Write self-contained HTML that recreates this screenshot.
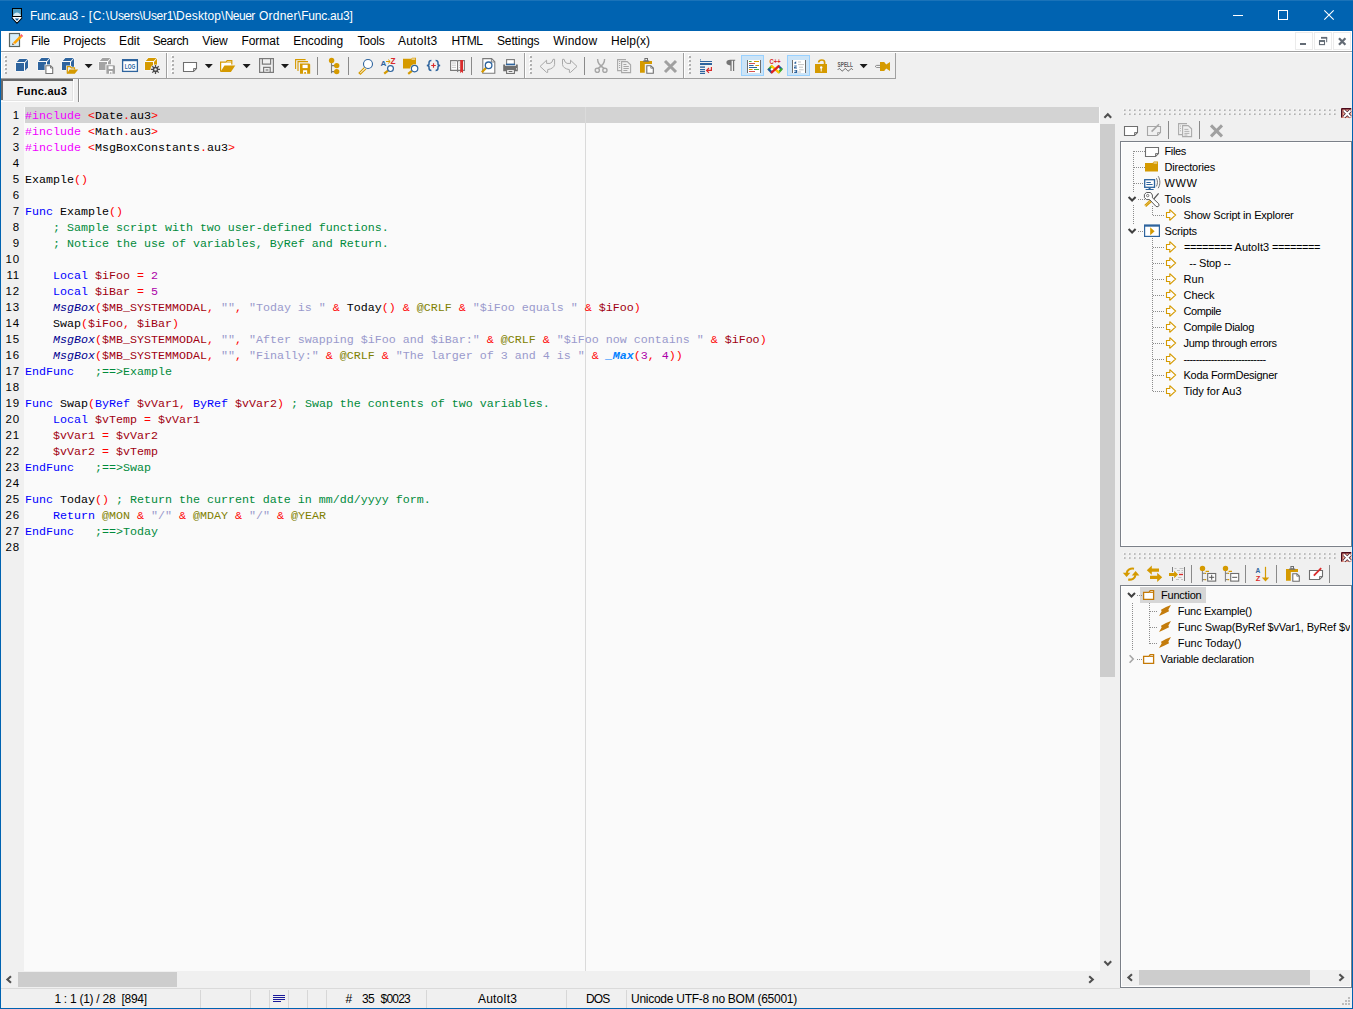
<!DOCTYPE html>
<html lang="en"><head><meta charset="utf-8"><title>Func.au3 - PSPad</title>
<style>

html,body{margin:0;padding:0;}
body{width:1353px;height:1009px;overflow:hidden;background:#f0f0f0;font-family:'Liberation Sans',sans-serif;}
#win{position:relative;width:1353px;height:1009px;background:#f0f0f0;overflow:hidden;}
#win div,#win span,#win svg{position:absolute;}
.t{white-space:pre;line-height:1;font-family:'Liberation Sans',sans-serif;color:#000;}
.code{left:25px;height:16px;line-height:16px;white-space:pre;font-family:'Liberation Mono',monospace;font-size:11.667px;color:#000;}
.code span{position:static !important;}
.ln{left:1px;width:18.800px;letter-spacing:0.700px;text-align:right;height:16px;line-height:16px;font-size:11.5px;color:#000;font-family:'Liberation Sans',sans-serif;}
.k{color:#0000ff}.c{color:#008a3a}.s{color:#9999cc}.o{color:#ff0000}.v{color:#a00010}.n{color:#ac00a9}
.m{color:#808000}.p{color:#f000ff}.f{color:#000090;font-style:italic}.u{color:#0080ff;font-style:italic;font-weight:bold}

</style></head>
<body>
<div id="win">
<div style="left:0;top:0;width:1353px;height:31px;background:#0063b1"></div>
<div style="left:0;top:0;width:1353px;height:1px;background:#1a73b9"></div>
<div style="left:0;top:31px;width:1px;height:978px;background:#0063b1"></div>
<div style="left:1352px;top:31px;width:1px;height:978px;background:#0063b1"></div>
<div style="left:0;top:1008px;width:1353px;height:1px;background:#0063b1"></div>
<svg style="left:10px;top:6px" width="14" height="19" viewBox="10 6 14 19">
<rect x="12.500" y="8.500" width="9" height="8" fill="#4d9bc0" stroke="#000" stroke-width="1"/>
<path d="M13 16c0.800-2.400 2.600-3.400 4-3.400s3.200 1 4 3.400z" fill="#d4e9f0"/>
<path d="M12.400 17h9.200v1.200l-4.600 4.900-4.600-4.900z" fill="#fff"/>
<path d="M12 17.400l0.300 0.900 4.700 5 4.700-5 0.300-0.900" fill="none" stroke="#000" stroke-width="1.100"/>
<path d="M14.800 18.600h4.400l-2.200 2.300z" fill="#0a5a96"/>
</svg>
<span class="t" style="left:30.0px;top:9.64px;font-size:12px;color:#fff;letter-spacing:-0.258px;">Func.au3 - </span>
<span class="t" style="left:88.8px;top:9.64px;font-size:12px;color:#fff;letter-spacing:0.507px;">[C:\</span>
<span class="t" style="left:109.5px;top:9.64px;font-size:12px;color:#fff;letter-spacing:-0.279px;">Users\</span>
<span class="t" style="left:142.5px;top:9.64px;font-size:12px;color:#fff;letter-spacing:-0.291px;">User1\</span>
<span class="t" style="left:176.1px;top:9.64px;font-size:12px;color:#fff;letter-spacing:0.155px;">Desktop\</span>
<span class="t" style="left:224.7px;top:9.64px;font-size:12px;color:#fff;letter-spacing:-0.518px;">Neuer </span>
<span class="t" style="left:259.0px;top:9.64px;font-size:12px;color:#fff;letter-spacing:0.216px;">Ordner\</span>
<span class="t" style="left:301.2px;top:9.64px;font-size:12px;color:#fff;letter-spacing:-0.219px;">Func.au3]</span>
<svg style="left:1225px;top:0" width="127" height="31" viewBox="0 0 127 31" shape-rendering="crispEdges">
<rect x="8" y="15" width="10" height="1" fill="#fff"/>
<rect x="53.5" y="10.5" width="9" height="9" fill="none" stroke="#fff" stroke-width="1"/>
<g shape-rendering="auto"><path d="M99.3 10.3l9.4 9.4M108.7 10.3l-9.4 9.4" stroke="#fff" stroke-width="1.1" fill="none"/></g>
</svg>
<div style="left:1px;top:31px;width:1351px;height:20px;background:#fff"></div>
<div style="left:1px;top:51px;width:1351px;height:1px;background:#a0a0a0"></div>
<div style="left:1px;top:52px;width:1351px;height:1px;background:#fff"></div>
<svg style="left:8px;top:32px" width="17" height="17" viewBox="0 0 17 17">
<rect x="1.5" y="1.5" width="10" height="13" fill="#d6eefb" stroke="#5a6460" stroke-width="1.2"/>
<path d="M4.2 12.8l1.2-2.6 6.6-6.8 1.9 1.9-6.7 6.6z" fill="#ffa400"/>
<path d="M12 3.4l1.3-1.3 1.9 1.9-1.3 1.3z" fill="#ff5a66"/>
<path d="M4.2 12.8l0.6-1.5 1.2 1.1z" fill="#000"/>
<path d="M4.9 11.4l0.5-1.2 1.9 1.9-1.2 0.4z" fill="#ffc79a"/>
</svg>
<span class="t" style="left:31.0px;top:35.14px;font-size:12px;letter-spacing:-0.136px;">File</span>
<span class="t" style="left:63.300000000000004px;top:35.14px;font-size:12px;letter-spacing:-0.132px;">Projects</span>
<span class="t" style="left:119.10000000000001px;top:35.14px;font-size:12px;letter-spacing:0.028px;">Edit</span>
<span class="t" style="left:152.7px;top:35.14px;font-size:12px;letter-spacing:-0.405px;">Search</span>
<span class="t" style="left:202.2px;top:35.14px;font-size:12px;letter-spacing:-0.074px;">View</span>
<span class="t" style="left:241.39999999999998px;top:35.14px;font-size:12px;letter-spacing:-0.019px;">Format</span>
<span class="t" style="left:293.2px;top:35.14px;font-size:12px;letter-spacing:-0.006px;">Encoding</span>
<span class="t" style="left:357.59999999999997px;top:35.14px;font-size:12px;letter-spacing:-0.223px;">Tools</span>
<span class="t" style="left:398.0px;top:35.14px;font-size:12px;letter-spacing:0.210px;">AutoIt3</span>
<span class="t" style="left:451.4px;top:35.14px;font-size:12px;letter-spacing:-0.368px;">HTML</span>
<span class="t" style="left:496.9px;top:35.14px;font-size:12px;letter-spacing:-0.095px;">Settings</span>
<span class="t" style="left:553.2px;top:35.14px;font-size:12px;letter-spacing:0.252px;">Window</span>
<span class="t" style="left:611.1px;top:35.14px;font-size:12px;letter-spacing:0.033px;">Help(x)</span>
<svg style="left:1294px;top:31px" width="58" height="20" viewBox="0 0 58 20">
<g fill="#fff" stroke="#ebebeb" stroke-width="1"><rect x="1.500" y="1.500" width="17" height="17"/><rect x="20.500" y="1.500" width="17" height="17"/><rect x="39.500" y="1.500" width="17" height="17"/></g>
<rect x="6" y="12" width="6" height="2" fill="#636b75"/>
<path d="M27 6.800h6.200" stroke="#636b75" stroke-width="1.800"/><path d="M32.700 6.800v4.400" stroke="#636b75" stroke-width="1"/>
<rect x="25.500" y="10" width="5" height="3.600" fill="#fff" stroke="#636b75" stroke-width="1.100"/><path d="M25 10h6" stroke="#636b75" stroke-width="1.800"/>
<path d="M45 7.300l6.400 6.400M51.400 7.300l-6.400 6.400" stroke="#636b75" stroke-width="2.300" fill="none"/>
</svg>
<svg style="left:0;top:79px" width="90" height="24" viewBox="0 79 90 24" shape-rendering="crispEdges">
<rect x="1" y="79" width="72" height="2" fill="#696969"/>
<rect x="1" y="79" width="2" height="21" fill="#696969"/>
<rect x="3" y="81" width="69" height="19" fill="#f1f1f1"/>
<rect x="72" y="81" width="1" height="20" fill="#e3e3e3"/>
<rect x="3" y="100" width="70" height="1" fill="#e3e3e3"/>
<rect x="73" y="79" width="1" height="23" fill="#fff"/>
<rect x="1" y="101" width="73" height="1" fill="#fff"/>
<rect x="78" y="79" width="1" height="23" fill="#8c8c8c"/>
<rect x="79" y="79" width="1" height="23" fill="#fff"/>
</svg>
<span class="t" style="left:16.7px;top:86.09px;font-size:11px;font-weight:bold;letter-spacing:0.288px;">Func.au3</span>
<svg style="left:0;top:52px" width="900" height="28" viewBox="0 52 900 28">
<rect x="1" y="78" width="895" height="1" fill="#a0a0a0" shape-rendering="crispEdges"/><rect x="1" y="53" width="1" height="25" fill="#fff"/>
<rect x="895" y="53" width="1" height="26" fill="#a0a0a0" shape-rendering="crispEdges"/>
<g shape-rendering="crispEdges"><rect x="4" y="55" width="2" height="2" fill="#fff"/><rect x="5" y="56" width="2" height="2" fill="#b0b0b0"/><rect x="4" y="59" width="2" height="2" fill="#fff"/><rect x="5" y="60" width="2" height="2" fill="#b0b0b0"/><rect x="4" y="63" width="2" height="2" fill="#fff"/><rect x="5" y="64" width="2" height="2" fill="#b0b0b0"/><rect x="4" y="67" width="2" height="2" fill="#fff"/><rect x="5" y="68" width="2" height="2" fill="#b0b0b0"/><rect x="4" y="71" width="2" height="2" fill="#fff"/><rect x="5" y="72" width="2" height="2" fill="#b0b0b0"/></g>
<path d="M16 63l3.400-4h8.600v8.400l-3.400 3.600h-8.600z" fill="#fbfbfb" stroke="#fbfbfb" stroke-width="1.200" stroke-linejoin="round"/><g fill="#2e649e"><rect x="16" y="63" width="8" height="8"/><path d="M16.7 62.1l2.700-3.100h8l-2.700 3.100z"/><path d="M25 62.9l3-3.300v7.800l-3 3.300z"/></g>
<path d="M38 62l3.400-4h8.600v8.400l-3.400 3.600h-8.600z" fill="#fbfbfb" stroke="#fbfbfb" stroke-width="1.200" stroke-linejoin="round"/><g fill="#2e649e"><rect x="38" y="62" width="8" height="8"/><path d="M38.7 61.1l2.700-3.100h8l-2.700 3.100z"/><path d="M47 61.9l3-3.300v7.800l-3 3.300z"/></g>
<rect x="44.600" y="64.400" width="10" height="10.400" fill="#f0f0f0"/><path d="M45.900 65.700h4.800l2 2v5.800h-6.800z" fill="#fff" stroke="#757575" stroke-width="1.100"/><path d="M50.500 65.800v2.200h2.200" fill="none" stroke="#757575" stroke-width="0.900"/>
<path d="M62 62l3.400-4h8.600v8.400l-3.400 3.600h-8.600z" fill="#fbfbfb" stroke="#fbfbfb" stroke-width="1.200" stroke-linejoin="round"/><g fill="#2e649e"><rect x="62" y="62" width="8" height="8"/><path d="M62.7 61.1l2.700-3.100h8l-2.700 3.100z"/><path d="M71 61.9l3-3.300v7.800l-3 3.300z"/></g>
<path d="M66 74.500v-9h5l1 1.200h3.600v2h3.600l-3.800 5.800z" fill="#f0f0f0"/><path d="M67.300 73.400v-6.800h3l1 1.200h3.200v1.800" fill="#f0f0f0" stroke="#d59a00" stroke-width="1.200"/><path d="M66.800 73.800l2.800-4.300h8.600l-3.400 4.300z" fill="#d59a00"/>
<path d="M84.6 64h8l-4 4.2z" fill="#1a1a1a"/>
<path d="M99 62l3.400-4h8.600v8.400l-3.400 3.600h-8.600z" fill="#fbfbfb" stroke="#fbfbfb" stroke-width="1.200" stroke-linejoin="round"/><g fill="#a3a3a3"><rect x="99" y="62" width="8" height="8"/><path d="M99.7 61.1l2.700-3.100h8l-2.700 3.100z"/><path d="M108 61.9l3-3.300v7.800l-3 3.300z"/></g>
<rect x="105.4" y="64.2" width="10" height="10" fill="#f0f0f0"/>
<path d="M106.4 65.2h7.74l0.86 0.86v7.74h-8.6z" fill="#a3a3a3"/><rect x="108.55000000000001" y="66.232" width="4.3" height="2.7520000000000002" fill="#fff"/><path d="M108.98 73.8v-2.924h3.44v2.924h-1.032v-1.548h-1.3760000000000001v1.548z" fill="#fff"/>
<rect x="122.6" y="60" width="14.8" height="11.4" fill="#fff" stroke="#2e649e" stroke-width="1.3"/><rect x="122" y="59" width="16" height="2.2" fill="#2e649e"/>
<text x="130" y="68.600" text-anchor="middle" font-family="Liberation Sans, sans-serif" font-weight="bold" font-size="7.600" fill="#2e649e" textLength="10.600" lengthAdjust="spacingAndGlyphs">LOG</text>
<path d="M145 62l3.400-4h8.600v8.400l-3.400 3.600h-8.600z" fill="#fbfbfb" stroke="#fbfbfb" stroke-width="1.200" stroke-linejoin="round"/><g fill="#d59a00"><rect x="145" y="62" width="8" height="8"/><path d="M145.7 61.1l2.700-3.100h8l-2.700 3.100z"/><path d="M154 61.9l3-3.300v7.800l-3 3.300z"/></g>
<circle cx="155.5" cy="69.4" r="5" fill="#f0f0f0"/>
<g stroke="#4a4a4a" stroke-width="1.3" fill="none"><circle cx="155.5" cy="69.4" r="2.1"/><path d="M155.5 64.9v9M151 69.4h9M152.3 66.2l6.4 6.4M158.7 66.2l-6.4 6.4"/></g><circle cx="155.5" cy="69.4" r="1.2" fill="#f0f0f0"/>
<rect x="166" y="53" width="1" height="26" fill="#a0a0a0" shape-rendering="crispEdges"/><rect x="167" y="53" width="1" height="25" fill="#fff" shape-rendering="crispEdges"/>
<g shape-rendering="crispEdges"><rect x="171" y="55" width="2" height="2" fill="#fff"/><rect x="172" y="56" width="2" height="2" fill="#b0b0b0"/><rect x="171" y="59" width="2" height="2" fill="#fff"/><rect x="172" y="60" width="2" height="2" fill="#b0b0b0"/><rect x="171" y="63" width="2" height="2" fill="#fff"/><rect x="172" y="64" width="2" height="2" fill="#b0b0b0"/><rect x="171" y="67" width="2" height="2" fill="#fff"/><rect x="172" y="68" width="2" height="2" fill="#b0b0b0"/><rect x="171" y="71" width="2" height="2" fill="#fff"/><rect x="172" y="72" width="2" height="2" fill="#b0b0b0"/></g>
<path d="M183.5 62.5h13v6l-3 3h-10z" fill="#fff" stroke="#6e6e6e" stroke-width="1.1"/><path d="M196.5 68.5h-3v3" fill="none" stroke="#6e6e6e" stroke-width="0.8800000000000001"/>
<path d="M204.8 64h8l-4 4.2z" fill="#1a1a1a"/>
<path d="M220.6 71.5v-9.4h5.4l1.2-1.6h4.6v4" fill="#fff" stroke="#d59a00" stroke-width="1.2"/><path d="M226.6 62h5" stroke="#d59a00" stroke-width="1"/><path d="M220.3 72l4.2-6.6h10.8l-4.4 6.6z" fill="#d59a00"/>
<path d="M242.6 64h8l-4 4.2z" fill="#1a1a1a"/>
<g fill="none" stroke="#7b7b7b" stroke-width="1.2"><rect x="259.6" y="58.6" width="13.8" height="13.8"/><path d="M262.4 58.6v5.6h8.2v-5.6"/><path d="M263.6 72.4v-5h6.6v5"/></g><rect x="265.6" y="69.4" width="2.8" height="1.2" fill="#7b7b7b"/>
<path d="M281 64h8l-4 4.2z" fill="#1a1a1a"/>
<path d="M295.6 69v-9.4h10M298 71v-9.4h10" fill="none" stroke="#d59a00" stroke-width="1.1"/>
<path d="M300 63.6h9.18l1.02 1.02v9.18h-10.2z" fill="#d59a00"/><rect x="302.55" y="64.824" width="5.1" height="3.2640000000000002" fill="#fff"/><path d="M303.06 73.8v-3.468h4.08v3.468h-1.224v-1.836h-1.6320000000000001v1.836z" fill="#fff"/>
<rect x="317" y="57" width="1" height="18" fill="#8a8a8a" shape-rendering="crispEdges"/>
<path d="M331.5 62v11.2M331.5 65.6h4M331.5 71.6h4" stroke="#7b7b7b" stroke-width="1.1" fill="none"/><g fill="#d59a00"><circle cx="331.6" cy="60.5" r="2.7"/><circle cx="336.7" cy="65.6" r="2.7"/><circle cx="336.7" cy="71.6" r="2.7"/></g>
<rect x="348" y="57" width="1" height="18" fill="#8a8a8a" shape-rendering="crispEdges"/>
<path d="M364.6 67.4l-5.6 5.6 1.4 1.2 5.6-5.4" fill="#fff" stroke="#d59a00" stroke-width="1.1"/><circle cx="368" cy="64" r="4.5" fill="#fff" stroke="#2e649e" stroke-width="1.1"/>
<text x="380.6" y="66" font-family="Liberation Sans, sans-serif" font-weight="bold" font-size="8" fill="#2e649e">A</text>
<text x="390.4" y="64" font-family="Liberation Sans, sans-serif" font-weight="bold" font-size="8.2" fill="#d92b2b">Z</text>
<path d="M386 61.5h4M388.2 59.6l2 1.9-2 1.9" stroke="#d59a00" stroke-width="1" fill="none"/>
<path d="M387.99 70.59L384.2 73.6" stroke="#d59a00" stroke-width="2.2" stroke-linecap="butt"/><circle cx="390.5" cy="68.6" r="2.9" fill="#fff" stroke="#2e649e" stroke-width="1.2"/>
<path d="M403 58.8h8l1.2-1h3.8v10.8h-13z" fill="#d59a00"/><rect x="411.6" y="58.6" width="3.6" height="0.9" fill="#fff"/>
<circle cx="414.6" cy="68.6" r="4.4" fill="#f0f0f0"/>
<path d="M411.88 70.81L408.2 73.8" stroke="#d59a00" stroke-width="2.2" stroke-linecap="butt"/><circle cx="414.6" cy="68.6" r="3.2" fill="#fff" stroke="#2e649e" stroke-width="1.2"/>
<g fill="none" stroke="#2e649e" stroke-width="1.5"><path d="M431.4 60.6c-2 0-2.400 0.800-2.400 2.200v1.200c0 1-0.600 1.500-2.200 1.500 1.600 0 2.200 0.500 2.200 1.500v1.200c0 1.400 0.400 2.200 2.400 2.200"/><path d="M435.600 60.600c2 0 2.400 0.800 2.400 2.200v1.200c0 1 0.600 1.500 2.200 1.500-1.600 0-2.200 0.500-2.200 1.500v1.200c0 1.400-0.400 2.200-2.400 2.200"/></g>
<path d="M433.500 63.200v4.600M431.200 65.500h4.600" stroke="#d92b2b" stroke-width="1.200"/>
<g fill="#fff" stroke="#7b7b7b" stroke-width="1.1"><path d="M450.6 60.6h6.4l0.6 0.8v9.6l-0.6-0.6h-6.4z"/><path d="M464.4 60.6h-6.2l-0.6 0.8v9.6l0.6-0.6h6.2z"/></g>
<path d="M452 63h4M452 65.2h4M452 67.4h4M459 63h1M459 65.2h1M459 67.4h1" stroke="#c8c8c8" stroke-width="1"/>
<path d="M460.2 60h2.8v13.2l-1.4-1.4-1.4 1.4z" fill="#d92b2b"/>
<rect x="471" y="57" width="1" height="18" fill="#8a8a8a" shape-rendering="crispEdges"/>
<path d="M482.8 58.6h8.8l3.2 3.2v11.4h-12z" fill="#fff" stroke="#7b7b7b" stroke-width="1.1"/><path d="M491.4 58.8v3.2h3.2" fill="none" stroke="#7b7b7b" stroke-width="0.9"/>
<path d="M486.07 67.86L481.8 72.2" stroke="#d59a00" stroke-width="2.2" stroke-linecap="butt"/><circle cx="488.6" cy="65.3" r="3.3" fill="#fff" stroke="#2e649e" stroke-width="1.3"/>
<rect x="506.6" y="59.6" width="7.8" height="5" fill="#fff" stroke="#7b7b7b" stroke-width="1.1"/><rect x="506" y="63.6" width="9" height="1.6" fill="#2e649e"/>
<path d="M503.2 64.6h2v1.4h10.6v-1.4h2v6.6h-14.6z" fill="#6e6e6e"/><rect x="516" y="68.4" width="1" height="1" fill="#fff"/>
<rect x="506.6" y="69.6" width="7.8" height="3.8" fill="#fff" stroke="#6e6e6e" stroke-width="1.1"/><rect x="508.6" y="71" width="3.8" height="1" fill="#6e6e6e"/>
<rect x="524" y="53" width="1" height="26" fill="#a0a0a0" shape-rendering="crispEdges"/><rect x="525" y="53" width="1" height="25" fill="#fff" shape-rendering="crispEdges"/>
<g shape-rendering="crispEdges"><rect x="529" y="55" width="2" height="2" fill="#fff"/><rect x="530" y="56" width="2" height="2" fill="#b0b0b0"/><rect x="529" y="59" width="2" height="2" fill="#fff"/><rect x="530" y="60" width="2" height="2" fill="#b0b0b0"/><rect x="529" y="63" width="2" height="2" fill="#fff"/><rect x="530" y="64" width="2" height="2" fill="#b0b0b0"/><rect x="529" y="67" width="2" height="2" fill="#fff"/><rect x="530" y="68" width="2" height="2" fill="#b0b0b0"/><rect x="529" y="71" width="2" height="2" fill="#fff"/><rect x="530" y="72" width="2" height="2" fill="#b0b0b0"/></g>
<path d="M540.1 66.4L546.6 60.2V63.4H550Q552.6 62.6 553 59.3H554.6V64.5Q554 68.6 547.7 69.6V72.4H546.6Z" fill="none" stroke="#a8a8a8" stroke-width="1" stroke-linejoin="miter"/>
<path d="M577 66.4L570.5 60.2V63.4H567.1Q564.5 62.6 564.1 59.3H562.5V64.5Q563.1 68.6 569.4 69.6V72.4H570.5Z" fill="none" stroke="#a8a8a8" stroke-width="1" stroke-linejoin="miter"/>
<rect x="584" y="57" width="1" height="18" fill="#8a8a8a" shape-rendering="crispEdges"/>
<g fill="none" stroke="#a6a6a6" stroke-width="1.400"><path d="M597.600 59c0 4.200 1.400 5.400 6.400 9.400M604.600 59c0 4.200-1.400 5.400-6.400 9.400"/><circle cx="597.300" cy="70.300" r="2.100"/><circle cx="604.900" cy="70.300" r="2.100"/></g>
<g fill="none" stroke="#a8a8a8" stroke-width="1.1"><path d="M621 70.6h-3.4v-11h8.4"/><path d="M621.6 61.6h5.6l3.4 3.2v7.8h-9z"/></g><path d="M623.400 64.500h3M623.400 66.500h5.400M623.400 68.500h5.400M623.400 70.500h4M619 61.500h1.200M619 63.500h1.200M619 65.500h1.200M619 67.500h1.200" stroke="#a8a8a8" stroke-width="1"/>
<path d="M640 61h12v3h-7.200v8.800h-4.800z" fill="#d59a00"/><path d="M643.200 61.800v-1.400h1.200v-2.400h3.600v2.400h1.200v1.400z" fill="#6e6e6e"/><rect x="645.400" y="59" width="1.600" height="1.200" fill="#f0f0f0"/>
<path d="M646.800 65.700h4l2.500 2.400v5.100h-6.500z" fill="#fff" stroke="#6e6e6e" stroke-width="1.100"/><path d="M650.800 65.800v2.400h2.400" fill="none" stroke="#6e6e6e" stroke-width="0.800"/>
<path d="M665 61l11 11M676 61l-11 11" stroke="#a0a0a0" stroke-width="3" fill="none"/>
<rect x="683" y="53" width="1" height="26" fill="#a0a0a0" shape-rendering="crispEdges"/><rect x="684" y="53" width="1" height="25" fill="#fff" shape-rendering="crispEdges"/>
<g shape-rendering="crispEdges"><rect x="688" y="55" width="2" height="2" fill="#fff"/><rect x="689" y="56" width="2" height="2" fill="#b0b0b0"/><rect x="688" y="59" width="2" height="2" fill="#fff"/><rect x="689" y="60" width="2" height="2" fill="#b0b0b0"/><rect x="688" y="63" width="2" height="2" fill="#fff"/><rect x="689" y="64" width="2" height="2" fill="#b0b0b0"/><rect x="688" y="67" width="2" height="2" fill="#fff"/><rect x="689" y="68" width="2" height="2" fill="#b0b0b0"/><rect x="688" y="71" width="2" height="2" fill="#fff"/><rect x="689" y="72" width="2" height="2" fill="#b0b0b0"/></g>
<g fill="#2e649e"><rect x="700" y="59.4" width="1" height="1"/><rect x="700" y="61" width="12" height="1"/><rect x="700" y="63" width="12" height="2"/><rect x="700" y="66.4" width="5" height="1.4"/><rect x="700" y="69" width="5" height="1.2"/><rect x="700" y="71" width="5" height="1.2"/><rect x="700" y="73" width="5" height="1"/></g>
<path d="M711.4 67v3.4h-4.4M709 68l-2.4 2.4 2.4 2.4" fill="none" stroke="#d92b2b" stroke-width="1.2"/>
<path d="M730.4 71v-5.6c-2.4 0-4-1-4-2.8s1.4-2.8 4-2.8h4.8v1h-1v10.2h-1.2v-10.2h-1.4v10.2z" fill="#747474"/>
<rect x="741.5" y="55.5" width="22" height="20" fill="#cce4f7" stroke="#99d1ff" stroke-width="1"/>
<rect x="747.500" y="60" width="13" height="13" fill="#fff"/><path d="M747.500 60v13M760.500 60v13" stroke="#6e6e6e" stroke-width="1"/>
<rect x="749" y="61.0" width="2.6000000000000227" height="1" fill="#4aa84a"/>
<rect x="754" y="61.0" width="5" height="1" fill="#d59a00"/>
<rect x="749" y="63.0" width="6" height="1" fill="#d9534f"/>
<rect x="749" y="65.0" width="4.600000000000023" height="1" fill="#2e649e"/>
<rect x="755.4" y="65.0" width="3.6000000000000227" height="1" fill="#d59a00"/>
<rect x="749" y="67.0" width="8" height="1" fill="#2e649e"/>
<rect x="749" y="69.0" width="3.6000000000000227" height="1" fill="#d59a00"/>
<rect x="754" y="69.0" width="5" height="1" fill="#4aa84a"/>
<rect x="749" y="71.0" width="6" height="1" fill="#d9534f"/>
<text x="769.6" y="64" font-family="Liberation Sans, sans-serif" font-weight="bold" font-size="7.6" fill="#d92b2b" textLength="11" lengthAdjust="spacingAndGlyphs">C++</text>
<path d="M769.600 69l2.400-2.600 2.400 2.600-2.400 2.600zM775.800 69l2.400-2.600 2.400 2.600-2.400 2.600z" fill="#fff"/><g fill="none" stroke-width="2.300" stroke-linecap="square"><path d="M769 69.200L771.300 66.600" stroke="#3fae2a"/><path d="M769 69.600L771.300 72" stroke="#1f5aa0"/><path d="M781.200 68.800L779 66.600" stroke="#1f5aa0"/><path d="M781.200 69.400L779 72" stroke="#3fae2a"/><path d="M772 66.400L778.400 72.200" stroke="#ffc400"/><path d="M772 72.200L778.400 66.400" stroke="#dd2222"/></g>
<rect x="787.5" y="55.5" width="22" height="20" fill="#cce4f7" stroke="#99d1ff" stroke-width="1"/>
<rect x="792.500" y="60" width="13" height="13" fill="#fff"/><path d="M792.500 60v13M805.500 60v13" stroke="#6e6e6e" stroke-width="1"/>
<rect x="798" y="61.5" width="3" height="1" fill="#c4c4c4"/>
<rect x="798" y="64.1" width="6" height="1" fill="#c4c4c4"/>
<rect x="799" y="66.7" width="4" height="1" fill="#c4c4c4"/>
<rect x="799" y="69.3" width="4.600000000000023" height="1" fill="#c4c4c4"/>
<rect x="798" y="71.5" width="3" height="1" fill="#c4c4c4"/>
<g fill="#2e649e"><path d="M794.4 62.6l1.8-1.4v2.6h-1.8z"/><path d="M794.2 65.4h2.6v1.2h-1.2v1h1.4v1h-3v-1.6h1.4v-0.6h-1.2z"/><path d="M794.2 70h3v3h-3v-0.9h1.8v-0.5h-1.4v-0.8h1.4v-0.3h-1.8z"/></g>
<rect x="815" y="64" width="12" height="9" fill="#d59a00"/><path d="M824.600 64.500v-2.200c0-3-5.600-3.200-6 0.200" fill="none" stroke="#d59a00" stroke-width="1.700"/><circle cx="821.200" cy="67.400" r="1.200" fill="#fff"/><rect x="820.700" y="67.600" width="1" height="3.900" fill="#fff"/>
<text x="837.600" y="66.800" font-family="Liberation Sans, sans-serif" font-weight="bold" font-size="6.400" fill="#5a5a5a" textLength="15.200" lengthAdjust="spacingAndGlyphs">SPELL</text>
<path d="M837.800 69.800c1-1.600 2-1.600 3 0s2 1.600 3 0 2-1.600 3 0 2 1.600 3 0 2-1.600 3 0" fill="none" stroke="#5a5a5a" stroke-width="0.900"/>
<path d="M859.6 64h8l-4 4.2z" fill="#1a1a1a"/>
<path d="M880 62h4.200l2 2.600 3.800-2.600v9l-3.800-2.600-2 2.600h-4.200z" fill="#d59a00"/><path d="M880 65.400h-3.400l-1.400 1 1.400 1h3.400" fill="#fff" stroke="#7b7b7b" stroke-width="0.900"/>
</svg>
<div style="left:1px;top:107px;width:1099px;height:864px;background:#fafafa"></div>
<div style="left:1px;top:107px;width:23px;height:864px;background:#f0f0f0"></div>
<div style="left:25px;top:107px;width:1074px;height:16px;background:#d3d3d3"></div>
<div style="left:585px;top:107px;width:1px;height:16px;background:#dbdbdb"></div><div style="left:585px;top:123px;width:1px;height:848px;background:#dadada"></div>
<div class="ln" style="top:107px">1</div>
<div class="code" style="top:108px"><span class="p">#include</span> <span class="o">&lt;</span>Date<span class="o">.</span>au3<span class="o">&gt;</span></div>
<div class="ln" style="top:123px">2</div>
<div class="code" style="top:124px"><span class="p">#include</span> <span class="o">&lt;</span>Math<span class="o">.</span>au3<span class="o">&gt;</span></div>
<div class="ln" style="top:139px">3</div>
<div class="code" style="top:140px"><span class="p">#include</span> <span class="o">&lt;</span>MsgBoxConstants<span class="o">.</span>au3<span class="o">&gt;</span></div>
<div class="ln" style="top:155px">4</div>
<div class="ln" style="top:171px">5</div>
<div class="code" style="top:172px">Example<span class="o">()</span></div>
<div class="ln" style="top:187px">6</div>
<div class="ln" style="top:203px">7</div>
<div class="code" style="top:204px"><span class="k">Func</span> Example<span class="o">()</span></div>
<div class="ln" style="top:219px">8</div>
<div class="code" style="top:220px">    <span class="c">; Sample script with two user-defined functions.</span></div>
<div class="ln" style="top:235px">9</div>
<div class="code" style="top:236px">    <span class="c">; Notice the use of variables, ByRef and Return.</span></div>
<div class="ln" style="top:251px">10</div>
<div class="ln" style="top:267px">11</div>
<div class="code" style="top:268px">    <span class="k">Local</span> <span class="v">$iFoo</span> <span class="o">=</span> <span class="n">2</span></div>
<div class="ln" style="top:283px">12</div>
<div class="code" style="top:284px">    <span class="k">Local</span> <span class="v">$iBar</span> <span class="o">=</span> <span class="n">5</span></div>
<div class="ln" style="top:299px">13</div>
<div class="code" style="top:300px">    <span class="f">MsgBox</span><span class="o">(</span><span class="v">$MB_SYSTEMMODAL</span><span class="o">,</span> <span class="s">""</span><span class="o">,</span> <span class="s">"Today is "</span> <span class="o">&amp;</span> Today<span class="o">()</span> <span class="o">&amp;</span> <span class="m">@CRLF</span> <span class="o">&amp;</span> <span class="s">"$iFoo equals "</span> <span class="o">&amp;</span> <span class="v">$iFoo</span><span class="o">)</span></div>
<div class="ln" style="top:315px">14</div>
<div class="code" style="top:316px">    Swap<span class="o">(</span><span class="v">$iFoo</span><span class="o">,</span> <span class="v">$iBar</span><span class="o">)</span></div>
<div class="ln" style="top:331px">15</div>
<div class="code" style="top:332px">    <span class="f">MsgBox</span><span class="o">(</span><span class="v">$MB_SYSTEMMODAL</span><span class="o">,</span> <span class="s">""</span><span class="o">,</span> <span class="s">"After swapping $iFoo and $iBar:"</span> <span class="o">&amp;</span> <span class="m">@CRLF</span> <span class="o">&amp;</span> <span class="s">"$iFoo now contains "</span> <span class="o">&amp;</span> <span class="v">$iFoo</span><span class="o">)</span></div>
<div class="ln" style="top:347px">16</div>
<div class="code" style="top:348px">    <span class="f">MsgBox</span><span class="o">(</span><span class="v">$MB_SYSTEMMODAL</span><span class="o">,</span> <span class="s">""</span><span class="o">,</span> <span class="s">"Finally:"</span> <span class="o">&amp;</span> <span class="m">@CRLF</span> <span class="o">&amp;</span> <span class="s">"The larger of 3 and 4 is "</span> <span class="o">&amp;</span> <span class="u">_Max</span><span class="o">(</span><span class="n">3</span><span class="o">,</span> <span class="n">4</span><span class="o">))</span></div>
<div class="ln" style="top:363px">17</div>
<div class="code" style="top:364px"><span class="k">EndFunc</span>   <span class="c">;==&gt;Example</span></div>
<div class="ln" style="top:379px">18</div>
<div class="ln" style="top:395px">19</div>
<div class="code" style="top:396px"><span class="k">Func</span> Swap<span class="o">(</span><span class="k">ByRef</span> <span class="v">$vVar1</span><span class="o">,</span> <span class="k">ByRef</span> <span class="v">$vVar2</span><span class="o">)</span> <span class="c">; Swap the contents of two variables.</span></div>
<div class="ln" style="top:411px">20</div>
<div class="code" style="top:412px">    <span class="k">Local</span> <span class="v">$vTemp</span> <span class="o">=</span> <span class="v">$vVar1</span></div>
<div class="ln" style="top:427px">21</div>
<div class="code" style="top:428px">    <span class="v">$vVar1</span> <span class="o">=</span> <span class="v">$vVar2</span></div>
<div class="ln" style="top:443px">22</div>
<div class="code" style="top:444px">    <span class="v">$vVar2</span> <span class="o">=</span> <span class="v">$vTemp</span></div>
<div class="ln" style="top:459px">23</div>
<div class="code" style="top:460px"><span class="k">EndFunc</span>   <span class="c">;==&gt;Swap</span></div>
<div class="ln" style="top:475px">24</div>
<div class="ln" style="top:491px">25</div>
<div class="code" style="top:492px"><span class="k">Func</span> Today<span class="o">()</span> <span class="c">; Return the current date in mm/dd/yyyy form.</span></div>
<div class="ln" style="top:507px">26</div>
<div class="code" style="top:508px">    <span class="k">Return</span> <span class="m">@MON</span> <span class="o">&amp;</span> <span class="s">"/"</span> <span class="o">&amp;</span> <span class="m">@MDAY</span> <span class="o">&amp;</span> <span class="s">"/"</span> <span class="o">&amp;</span> <span class="m">@YEAR</span></div>
<div class="ln" style="top:523px">27</div>
<div class="code" style="top:524px"><span class="k">EndFunc</span>   <span class="c">;==&gt;Today</span></div>
<div class="ln" style="top:539px">28</div>
<div style="left:1100px;top:107px;width:16px;height:864px;background:#f0f0f0"></div>
<div style="left:1100px;top:124px;width:15px;height:553px;background:#cdcdcd"></div>
<div style="left:1px;top:971px;width:1099px;height:17px;background:#f0f0f0"></div>
<div style="left:18px;top:972px;width:159px;height:15px;background:#cdcdcd"></div>
<svg style="left:0;top:100px" width="1120" height="890" viewBox="0 100 1120 890"><path d="M1104.3999999999999 117.7L1107.8 114.3L1111.2 117.7" fill="none" stroke="#505050" stroke-width="2.1"/><path d="M1104.3999999999999 961.3L1107.8 964.7L1111.2 961.3" fill="none" stroke="#505050" stroke-width="2.1"/><path d="M11.0 976.2L7.3999999999999995 979.5L11.0 982.8" fill="none" stroke="#505050" stroke-width="2.1"/><path d="M1089.2 976.2L1092.8 979.5L1089.2 982.8" fill="none" stroke="#505050" stroke-width="2.1"/></svg>
<svg style="left:1116px;top:100px" width="236" height="890" viewBox="1116 100 236 890">
<rect x="1123.2" y="108.6" width="1.500" height="1.500" fill="#fbfbfb"/><rect x="1124" y="109.4" width="1.600" height="1.600" fill="#b0b0b0"/><rect x="1123.2" y="112.6" width="1.500" height="1.500" fill="#fbfbfb"/><rect x="1124" y="113.4" width="1.600" height="1.600" fill="#b0b0b0"/><rect x="1128.2" y="108.6" width="1.500" height="1.500" fill="#fbfbfb"/><rect x="1129" y="109.4" width="1.600" height="1.600" fill="#b0b0b0"/><rect x="1128.2" y="112.6" width="1.500" height="1.500" fill="#fbfbfb"/><rect x="1129" y="113.4" width="1.600" height="1.600" fill="#b0b0b0"/><rect x="1133.2" y="108.6" width="1.500" height="1.500" fill="#fbfbfb"/><rect x="1134" y="109.4" width="1.600" height="1.600" fill="#b0b0b0"/><rect x="1133.2" y="112.6" width="1.500" height="1.500" fill="#fbfbfb"/><rect x="1134" y="113.4" width="1.600" height="1.600" fill="#b0b0b0"/><rect x="1138.2" y="108.6" width="1.500" height="1.500" fill="#fbfbfb"/><rect x="1139" y="109.4" width="1.600" height="1.600" fill="#b0b0b0"/><rect x="1138.2" y="112.6" width="1.500" height="1.500" fill="#fbfbfb"/><rect x="1139" y="113.4" width="1.600" height="1.600" fill="#b0b0b0"/><rect x="1143.2" y="108.6" width="1.500" height="1.500" fill="#fbfbfb"/><rect x="1144" y="109.4" width="1.600" height="1.600" fill="#b0b0b0"/><rect x="1143.2" y="112.6" width="1.500" height="1.500" fill="#fbfbfb"/><rect x="1144" y="113.4" width="1.600" height="1.600" fill="#b0b0b0"/><rect x="1148.2" y="108.6" width="1.500" height="1.500" fill="#fbfbfb"/><rect x="1149" y="109.4" width="1.600" height="1.600" fill="#b0b0b0"/><rect x="1148.2" y="112.6" width="1.500" height="1.500" fill="#fbfbfb"/><rect x="1149" y="113.4" width="1.600" height="1.600" fill="#b0b0b0"/><rect x="1153.2" y="108.6" width="1.500" height="1.500" fill="#fbfbfb"/><rect x="1154" y="109.4" width="1.600" height="1.600" fill="#b0b0b0"/><rect x="1153.2" y="112.6" width="1.500" height="1.500" fill="#fbfbfb"/><rect x="1154" y="113.4" width="1.600" height="1.600" fill="#b0b0b0"/><rect x="1158.2" y="108.6" width="1.500" height="1.500" fill="#fbfbfb"/><rect x="1159" y="109.4" width="1.600" height="1.600" fill="#b0b0b0"/><rect x="1158.2" y="112.6" width="1.500" height="1.500" fill="#fbfbfb"/><rect x="1159" y="113.4" width="1.600" height="1.600" fill="#b0b0b0"/><rect x="1163.2" y="108.6" width="1.500" height="1.500" fill="#fbfbfb"/><rect x="1164" y="109.4" width="1.600" height="1.600" fill="#b0b0b0"/><rect x="1163.2" y="112.6" width="1.500" height="1.500" fill="#fbfbfb"/><rect x="1164" y="113.4" width="1.600" height="1.600" fill="#b0b0b0"/><rect x="1168.2" y="108.6" width="1.500" height="1.500" fill="#fbfbfb"/><rect x="1169" y="109.4" width="1.600" height="1.600" fill="#b0b0b0"/><rect x="1168.2" y="112.6" width="1.500" height="1.500" fill="#fbfbfb"/><rect x="1169" y="113.4" width="1.600" height="1.600" fill="#b0b0b0"/><rect x="1173.2" y="108.6" width="1.500" height="1.500" fill="#fbfbfb"/><rect x="1174" y="109.4" width="1.600" height="1.600" fill="#b0b0b0"/><rect x="1173.2" y="112.6" width="1.500" height="1.500" fill="#fbfbfb"/><rect x="1174" y="113.4" width="1.600" height="1.600" fill="#b0b0b0"/><rect x="1178.2" y="108.6" width="1.500" height="1.500" fill="#fbfbfb"/><rect x="1179" y="109.4" width="1.600" height="1.600" fill="#b0b0b0"/><rect x="1178.2" y="112.6" width="1.500" height="1.500" fill="#fbfbfb"/><rect x="1179" y="113.4" width="1.600" height="1.600" fill="#b0b0b0"/><rect x="1183.2" y="108.6" width="1.500" height="1.500" fill="#fbfbfb"/><rect x="1184" y="109.4" width="1.600" height="1.600" fill="#b0b0b0"/><rect x="1183.2" y="112.6" width="1.500" height="1.500" fill="#fbfbfb"/><rect x="1184" y="113.4" width="1.600" height="1.600" fill="#b0b0b0"/><rect x="1188.2" y="108.6" width="1.500" height="1.500" fill="#fbfbfb"/><rect x="1189" y="109.4" width="1.600" height="1.600" fill="#b0b0b0"/><rect x="1188.2" y="112.6" width="1.500" height="1.500" fill="#fbfbfb"/><rect x="1189" y="113.4" width="1.600" height="1.600" fill="#b0b0b0"/><rect x="1193.2" y="108.6" width="1.500" height="1.500" fill="#fbfbfb"/><rect x="1194" y="109.4" width="1.600" height="1.600" fill="#b0b0b0"/><rect x="1193.2" y="112.6" width="1.500" height="1.500" fill="#fbfbfb"/><rect x="1194" y="113.4" width="1.600" height="1.600" fill="#b0b0b0"/><rect x="1198.2" y="108.6" width="1.500" height="1.500" fill="#fbfbfb"/><rect x="1199" y="109.4" width="1.600" height="1.600" fill="#b0b0b0"/><rect x="1198.2" y="112.6" width="1.500" height="1.500" fill="#fbfbfb"/><rect x="1199" y="113.4" width="1.600" height="1.600" fill="#b0b0b0"/><rect x="1203.2" y="108.6" width="1.500" height="1.500" fill="#fbfbfb"/><rect x="1204" y="109.4" width="1.600" height="1.600" fill="#b0b0b0"/><rect x="1203.2" y="112.6" width="1.500" height="1.500" fill="#fbfbfb"/><rect x="1204" y="113.4" width="1.600" height="1.600" fill="#b0b0b0"/><rect x="1208.2" y="108.6" width="1.500" height="1.500" fill="#fbfbfb"/><rect x="1209" y="109.4" width="1.600" height="1.600" fill="#b0b0b0"/><rect x="1208.2" y="112.6" width="1.500" height="1.500" fill="#fbfbfb"/><rect x="1209" y="113.4" width="1.600" height="1.600" fill="#b0b0b0"/><rect x="1213.2" y="108.6" width="1.500" height="1.500" fill="#fbfbfb"/><rect x="1214" y="109.4" width="1.600" height="1.600" fill="#b0b0b0"/><rect x="1213.2" y="112.6" width="1.500" height="1.500" fill="#fbfbfb"/><rect x="1214" y="113.4" width="1.600" height="1.600" fill="#b0b0b0"/><rect x="1218.2" y="108.6" width="1.500" height="1.500" fill="#fbfbfb"/><rect x="1219" y="109.4" width="1.600" height="1.600" fill="#b0b0b0"/><rect x="1218.2" y="112.6" width="1.500" height="1.500" fill="#fbfbfb"/><rect x="1219" y="113.4" width="1.600" height="1.600" fill="#b0b0b0"/><rect x="1223.2" y="108.6" width="1.500" height="1.500" fill="#fbfbfb"/><rect x="1224" y="109.4" width="1.600" height="1.600" fill="#b0b0b0"/><rect x="1223.2" y="112.6" width="1.500" height="1.500" fill="#fbfbfb"/><rect x="1224" y="113.4" width="1.600" height="1.600" fill="#b0b0b0"/><rect x="1228.2" y="108.6" width="1.500" height="1.500" fill="#fbfbfb"/><rect x="1229" y="109.4" width="1.600" height="1.600" fill="#b0b0b0"/><rect x="1228.2" y="112.6" width="1.500" height="1.500" fill="#fbfbfb"/><rect x="1229" y="113.4" width="1.600" height="1.600" fill="#b0b0b0"/><rect x="1233.2" y="108.6" width="1.500" height="1.500" fill="#fbfbfb"/><rect x="1234" y="109.4" width="1.600" height="1.600" fill="#b0b0b0"/><rect x="1233.2" y="112.6" width="1.500" height="1.500" fill="#fbfbfb"/><rect x="1234" y="113.4" width="1.600" height="1.600" fill="#b0b0b0"/><rect x="1238.2" y="108.6" width="1.500" height="1.500" fill="#fbfbfb"/><rect x="1239" y="109.4" width="1.600" height="1.600" fill="#b0b0b0"/><rect x="1238.2" y="112.6" width="1.500" height="1.500" fill="#fbfbfb"/><rect x="1239" y="113.4" width="1.600" height="1.600" fill="#b0b0b0"/><rect x="1243.2" y="108.6" width="1.500" height="1.500" fill="#fbfbfb"/><rect x="1244" y="109.4" width="1.600" height="1.600" fill="#b0b0b0"/><rect x="1243.2" y="112.6" width="1.500" height="1.500" fill="#fbfbfb"/><rect x="1244" y="113.4" width="1.600" height="1.600" fill="#b0b0b0"/><rect x="1248.2" y="108.6" width="1.500" height="1.500" fill="#fbfbfb"/><rect x="1249" y="109.4" width="1.600" height="1.600" fill="#b0b0b0"/><rect x="1248.2" y="112.6" width="1.500" height="1.500" fill="#fbfbfb"/><rect x="1249" y="113.4" width="1.600" height="1.600" fill="#b0b0b0"/><rect x="1253.2" y="108.6" width="1.500" height="1.500" fill="#fbfbfb"/><rect x="1254" y="109.4" width="1.600" height="1.600" fill="#b0b0b0"/><rect x="1253.2" y="112.6" width="1.500" height="1.500" fill="#fbfbfb"/><rect x="1254" y="113.4" width="1.600" height="1.600" fill="#b0b0b0"/><rect x="1258.2" y="108.6" width="1.500" height="1.500" fill="#fbfbfb"/><rect x="1259" y="109.4" width="1.600" height="1.600" fill="#b0b0b0"/><rect x="1258.2" y="112.6" width="1.500" height="1.500" fill="#fbfbfb"/><rect x="1259" y="113.4" width="1.600" height="1.600" fill="#b0b0b0"/><rect x="1263.2" y="108.6" width="1.500" height="1.500" fill="#fbfbfb"/><rect x="1264" y="109.4" width="1.600" height="1.600" fill="#b0b0b0"/><rect x="1263.2" y="112.6" width="1.500" height="1.500" fill="#fbfbfb"/><rect x="1264" y="113.4" width="1.600" height="1.600" fill="#b0b0b0"/><rect x="1268.2" y="108.6" width="1.500" height="1.500" fill="#fbfbfb"/><rect x="1269" y="109.4" width="1.600" height="1.600" fill="#b0b0b0"/><rect x="1268.2" y="112.6" width="1.500" height="1.500" fill="#fbfbfb"/><rect x="1269" y="113.4" width="1.600" height="1.600" fill="#b0b0b0"/><rect x="1273.2" y="108.6" width="1.500" height="1.500" fill="#fbfbfb"/><rect x="1274" y="109.4" width="1.600" height="1.600" fill="#b0b0b0"/><rect x="1273.2" y="112.6" width="1.500" height="1.500" fill="#fbfbfb"/><rect x="1274" y="113.4" width="1.600" height="1.600" fill="#b0b0b0"/><rect x="1278.2" y="108.6" width="1.500" height="1.500" fill="#fbfbfb"/><rect x="1279" y="109.4" width="1.600" height="1.600" fill="#b0b0b0"/><rect x="1278.2" y="112.6" width="1.500" height="1.500" fill="#fbfbfb"/><rect x="1279" y="113.4" width="1.600" height="1.600" fill="#b0b0b0"/><rect x="1283.2" y="108.6" width="1.500" height="1.500" fill="#fbfbfb"/><rect x="1284" y="109.4" width="1.600" height="1.600" fill="#b0b0b0"/><rect x="1283.2" y="112.6" width="1.500" height="1.500" fill="#fbfbfb"/><rect x="1284" y="113.4" width="1.600" height="1.600" fill="#b0b0b0"/><rect x="1288.2" y="108.6" width="1.500" height="1.500" fill="#fbfbfb"/><rect x="1289" y="109.4" width="1.600" height="1.600" fill="#b0b0b0"/><rect x="1288.2" y="112.6" width="1.500" height="1.500" fill="#fbfbfb"/><rect x="1289" y="113.4" width="1.600" height="1.600" fill="#b0b0b0"/><rect x="1293.2" y="108.6" width="1.500" height="1.500" fill="#fbfbfb"/><rect x="1294" y="109.4" width="1.600" height="1.600" fill="#b0b0b0"/><rect x="1293.2" y="112.6" width="1.500" height="1.500" fill="#fbfbfb"/><rect x="1294" y="113.4" width="1.600" height="1.600" fill="#b0b0b0"/><rect x="1298.2" y="108.6" width="1.500" height="1.500" fill="#fbfbfb"/><rect x="1299" y="109.4" width="1.600" height="1.600" fill="#b0b0b0"/><rect x="1298.2" y="112.6" width="1.500" height="1.500" fill="#fbfbfb"/><rect x="1299" y="113.4" width="1.600" height="1.600" fill="#b0b0b0"/><rect x="1303.2" y="108.6" width="1.500" height="1.500" fill="#fbfbfb"/><rect x="1304" y="109.4" width="1.600" height="1.600" fill="#b0b0b0"/><rect x="1303.2" y="112.6" width="1.500" height="1.500" fill="#fbfbfb"/><rect x="1304" y="113.4" width="1.600" height="1.600" fill="#b0b0b0"/><rect x="1308.2" y="108.6" width="1.500" height="1.500" fill="#fbfbfb"/><rect x="1309" y="109.4" width="1.600" height="1.600" fill="#b0b0b0"/><rect x="1308.2" y="112.6" width="1.500" height="1.500" fill="#fbfbfb"/><rect x="1309" y="113.4" width="1.600" height="1.600" fill="#b0b0b0"/><rect x="1313.2" y="108.6" width="1.500" height="1.500" fill="#fbfbfb"/><rect x="1314" y="109.4" width="1.600" height="1.600" fill="#b0b0b0"/><rect x="1313.2" y="112.6" width="1.500" height="1.500" fill="#fbfbfb"/><rect x="1314" y="113.4" width="1.600" height="1.600" fill="#b0b0b0"/><rect x="1318.2" y="108.6" width="1.500" height="1.500" fill="#fbfbfb"/><rect x="1319" y="109.4" width="1.600" height="1.600" fill="#b0b0b0"/><rect x="1318.2" y="112.6" width="1.500" height="1.500" fill="#fbfbfb"/><rect x="1319" y="113.4" width="1.600" height="1.600" fill="#b0b0b0"/><rect x="1323.2" y="108.6" width="1.500" height="1.500" fill="#fbfbfb"/><rect x="1324" y="109.4" width="1.600" height="1.600" fill="#b0b0b0"/><rect x="1323.2" y="112.6" width="1.500" height="1.500" fill="#fbfbfb"/><rect x="1324" y="113.4" width="1.600" height="1.600" fill="#b0b0b0"/><rect x="1328.2" y="108.6" width="1.500" height="1.500" fill="#fbfbfb"/><rect x="1329" y="109.4" width="1.600" height="1.600" fill="#b0b0b0"/><rect x="1328.2" y="112.6" width="1.500" height="1.500" fill="#fbfbfb"/><rect x="1329" y="113.4" width="1.600" height="1.600" fill="#b0b0b0"/><rect x="1333.2" y="108.6" width="1.500" height="1.500" fill="#fbfbfb"/><rect x="1334" y="109.4" width="1.600" height="1.600" fill="#b0b0b0"/><rect x="1333.2" y="112.6" width="1.500" height="1.500" fill="#fbfbfb"/><rect x="1334" y="113.4" width="1.600" height="1.600" fill="#b0b0b0"/>
<rect x="1341" y="108" width="10.400" height="10" fill="#f3a08e"/><path d="M1344 110.5l6.500 6.500M1350.5 110.5l-6.500 6.500" stroke="#3c2030" stroke-width="3.200"/><path d="M1344 110.5l6.500 6.500M1350.5 110.5l-6.500 6.500" stroke="#fff" stroke-width="1.900"/><path d="M1341.7 117.6v-8.200q0-0.700 0.700-0.700h8.800" fill="none" stroke="#4a0a1c" stroke-width="1.400"/>
<path d="M1124.5 126.5h13v6l-3 3h-10z" fill="#fff" stroke="#6e6e6e" stroke-width="1.1"/><path d="M1137.5 132.5h-3v3" fill="none" stroke="#6e6e6e" stroke-width="0.8800000000000001"/>
<path d="M1147.5 126.5h13v6l-3 3h-10z" fill="#f0f0f0" stroke="#a6a6a6" stroke-width="1.1"/><path d="M1160.5 132.5h-3v3" fill="none" stroke="#a6a6a6" stroke-width="0.8800000000000001"/>
<path d="M1151.6 131.6l7.4-7.4" stroke="#a6a6a6" stroke-width="1.6"/>
<rect x="1168" y="121" width="1" height="18" fill="#8a8a8a"/>
<g fill="none" stroke="#ababab" stroke-width="1.1"><path d="M1182 134.6h-3.4v-11h8.4"/><path d="M1182.6 125.6h5.6l3.4 3.2v7.8h-9z"/></g><path d="M1184.4 129.4h4M1184.4 131.4h5M1184.4 133.4h5M1184.4 135h3M1180 126h1M1180 128.4h1M1180 130.8h1" stroke="#ababab" stroke-width="0.9"/>
<rect x="1199" y="121" width="1" height="18" fill="#8a8a8a"/>
<path d="M1211 125.4l11 11M1222 125.4l-11 11" stroke="#a0a0a0" stroke-width="3" fill="none"/>
<rect x="1120.5" y="141.5" width="231" height="405" fill="#fafafa" stroke="#7b8088" stroke-width="1"/><rect x="1121.500" y="142.500" width="229" height="403" fill="none" stroke="#fff" stroke-width="1"/>
<path d="M1133.5 151V236" stroke="#8c8c8c" stroke-width="1" stroke-dasharray="1 1" shape-rendering="crispEdges"/>
<path d="M1134 151.5H1145" stroke="#8c8c8c" stroke-width="1" stroke-dasharray="1 1" shape-rendering="crispEdges"/>
<path d="M1134 167.5H1145" stroke="#8c8c8c" stroke-width="1" stroke-dasharray="1 1" shape-rendering="crispEdges"/>
<path d="M1134 183.5H1145" stroke="#8c8c8c" stroke-width="1" stroke-dasharray="1 1" shape-rendering="crispEdges"/>
<path d="M1138 199.5H1146" stroke="#8c8c8c" stroke-width="1" stroke-dasharray="1 1" shape-rendering="crispEdges"/>
<path d="M1138 231.5H1146" stroke="#8c8c8c" stroke-width="1" stroke-dasharray="1 1" shape-rendering="crispEdges"/>
<path d="M1152.5 206V216" stroke="#8c8c8c" stroke-width="1" stroke-dasharray="1 1" shape-rendering="crispEdges"/>
<path d="M1153 215.5H1164" stroke="#8c8c8c" stroke-width="1" stroke-dasharray="1 1" shape-rendering="crispEdges"/>
<path d="M1152.5 238V392" stroke="#8c8c8c" stroke-width="1" stroke-dasharray="1 1" shape-rendering="crispEdges"/>
<path d="M1153 247.5H1164" stroke="#8c8c8c" stroke-width="1" stroke-dasharray="1 1" shape-rendering="crispEdges"/>
<path d="M1153 263.5H1164" stroke="#8c8c8c" stroke-width="1" stroke-dasharray="1 1" shape-rendering="crispEdges"/>
<path d="M1153 279.5H1164" stroke="#8c8c8c" stroke-width="1" stroke-dasharray="1 1" shape-rendering="crispEdges"/>
<path d="M1153 295.5H1164" stroke="#8c8c8c" stroke-width="1" stroke-dasharray="1 1" shape-rendering="crispEdges"/>
<path d="M1153 311.5H1164" stroke="#8c8c8c" stroke-width="1" stroke-dasharray="1 1" shape-rendering="crispEdges"/>
<path d="M1153 327.5H1164" stroke="#8c8c8c" stroke-width="1" stroke-dasharray="1 1" shape-rendering="crispEdges"/>
<path d="M1153 343.5H1164" stroke="#8c8c8c" stroke-width="1" stroke-dasharray="1 1" shape-rendering="crispEdges"/>
<path d="M1153 359.5H1164" stroke="#8c8c8c" stroke-width="1" stroke-dasharray="1 1" shape-rendering="crispEdges"/>
<path d="M1153 375.5H1164" stroke="#8c8c8c" stroke-width="1" stroke-dasharray="1 1" shape-rendering="crispEdges"/>
<path d="M1153 391.5H1164" stroke="#8c8c8c" stroke-width="1" stroke-dasharray="1 1" shape-rendering="crispEdges"/>
<rect x="1127" y="193" width="11" height="12" fill="#fafafa"/><rect x="1127" y="225" width="11" height="12" fill="#fafafa"/>
<path d="M1128.6 197l3.500 3.500 3.500-3.500" fill="none" stroke="#404040" stroke-width="2"/>
<path d="M1128.6 229l3.500 3.500 3.500-3.500" fill="none" stroke="#404040" stroke-width="2"/>
<path d="M1145.5 147.5h13v6l-3 3h-10z" fill="#fff" stroke="#6e6e6e" stroke-width="1.1"/><path d="M1158.5 153.5h-3v3" fill="none" stroke="#6e6e6e" stroke-width="0.8800000000000001"/>
<path d="M1145 171.6v-8.6h7.6l1.4-1.6h4v10.2z" fill="#d59a00"/><rect x="1153.6" y="162.6" width="3.6" height="0.8" fill="#fff"/>
<rect x="1144.700" y="179.700" width="9.800" height="7.600" fill="#fff" stroke="#2e649e" stroke-width="1.300"/><path d="M1146.400 182.500h4.400M1146.400 184.500h6.200" stroke="#2e649e" stroke-width="1"/><path d="M1148.600 188h2v1h3v1.100h-8v-1.100h3z" fill="#2e649e"/><path d="M1156.400 178.200c1.400 2.400 1.400 5.800 0 8.200M1158.200 176.200c2.200 3.600 2.200 8.400 0 12" fill="none" stroke="#666" stroke-width="0.900"/>
<path d="M1158.600 193.400l-4.800 5.600" stroke="#555" stroke-width="1.200"/><path d="M1151.400 200.400l-6.200 5.600" stroke="#d59a00" stroke-width="2.800"/><path d="M1150.800 200.800l-5.400 4.900" stroke="#fff" stroke-width="0.900" stroke-dasharray="0.800 0.800"/>
<path d="M1146.400 192.500h4.200l1.800 2.500v2.800l6.200 5.800q1 1.800-0.200 2.800-1.400 1-2.800-0.400l-6-6.400h-3l-2.200-2v-3.200z" fill="#fff" stroke="#5a5a5a" stroke-width="1"/><circle cx="1147.700" cy="195.600" r="1.200" fill="#fafafa" stroke="#5a5a5a" stroke-width="0.800"/>
<path d="M1166.5 212.5h3.300v-2.900l5.800 5.400-5.800 5.400v-2.900h-3.300z" fill="#fdfdfd" stroke="#d59a00" stroke-width="1.100" stroke-linejoin="miter" stroke-miterlimit="1.500"/>
<rect x="1144.6" y="225.600" width="14.800" height="10.800" fill="#fff" stroke="#2e649e" stroke-width="1.2"/><rect x="1144" y="224.400" width="16" height="2.200" fill="#2e649e"/><path d="M1150.200 227.200l4.400 4-4.400 4z" fill="#d59a00"/>
<path d="M1166.5 244.5h3.300v-2.900l5.800 5.400-5.800 5.400v-2.900h-3.300z" fill="#fdfdfd" stroke="#d59a00" stroke-width="1.100" stroke-linejoin="miter" stroke-miterlimit="1.500"/>
<path d="M1166.5 260.5h3.300v-2.900l5.800 5.400-5.800 5.400v-2.900h-3.300z" fill="#fdfdfd" stroke="#d59a00" stroke-width="1.100" stroke-linejoin="miter" stroke-miterlimit="1.500"/>
<path d="M1166.5 276.5h3.300v-2.900l5.800 5.400-5.800 5.400v-2.900h-3.300z" fill="#fdfdfd" stroke="#d59a00" stroke-width="1.100" stroke-linejoin="miter" stroke-miterlimit="1.500"/>
<path d="M1166.5 292.5h3.300v-2.900l5.800 5.400-5.800 5.400v-2.900h-3.300z" fill="#fdfdfd" stroke="#d59a00" stroke-width="1.100" stroke-linejoin="miter" stroke-miterlimit="1.500"/>
<path d="M1166.5 308.5h3.300v-2.900l5.800 5.400-5.800 5.400v-2.900h-3.300z" fill="#fdfdfd" stroke="#d59a00" stroke-width="1.100" stroke-linejoin="miter" stroke-miterlimit="1.500"/>
<path d="M1166.5 324.5h3.300v-2.900l5.800 5.400-5.800 5.400v-2.900h-3.300z" fill="#fdfdfd" stroke="#d59a00" stroke-width="1.100" stroke-linejoin="miter" stroke-miterlimit="1.500"/>
<path d="M1166.5 340.5h3.300v-2.900l5.800 5.400-5.800 5.400v-2.900h-3.300z" fill="#fdfdfd" stroke="#d59a00" stroke-width="1.100" stroke-linejoin="miter" stroke-miterlimit="1.500"/>
<path d="M1166.5 356.5h3.300v-2.900l5.800 5.400-5.800 5.400v-2.900h-3.300z" fill="#fdfdfd" stroke="#d59a00" stroke-width="1.100" stroke-linejoin="miter" stroke-miterlimit="1.500"/>
<path d="M1166.5 372.5h3.300v-2.900l5.800 5.400-5.800 5.400v-2.900h-3.300z" fill="#fdfdfd" stroke="#d59a00" stroke-width="1.100" stroke-linejoin="miter" stroke-miterlimit="1.500"/>
<path d="M1166.5 388.5h3.300v-2.900l5.800 5.400-5.800 5.400v-2.900h-3.300z" fill="#fdfdfd" stroke="#d59a00" stroke-width="1.100" stroke-linejoin="miter" stroke-miterlimit="1.500"/>
<rect x="1123.2" y="552.4" width="1.500" height="1.500" fill="#fbfbfb"/><rect x="1124" y="553.2" width="1.600" height="1.600" fill="#b0b0b0"/><rect x="1123.2" y="556.4" width="1.500" height="1.500" fill="#fbfbfb"/><rect x="1124" y="557.2" width="1.600" height="1.600" fill="#b0b0b0"/><rect x="1128.2" y="552.4" width="1.500" height="1.500" fill="#fbfbfb"/><rect x="1129" y="553.2" width="1.600" height="1.600" fill="#b0b0b0"/><rect x="1128.2" y="556.4" width="1.500" height="1.500" fill="#fbfbfb"/><rect x="1129" y="557.2" width="1.600" height="1.600" fill="#b0b0b0"/><rect x="1133.2" y="552.4" width="1.500" height="1.500" fill="#fbfbfb"/><rect x="1134" y="553.2" width="1.600" height="1.600" fill="#b0b0b0"/><rect x="1133.2" y="556.4" width="1.500" height="1.500" fill="#fbfbfb"/><rect x="1134" y="557.2" width="1.600" height="1.600" fill="#b0b0b0"/><rect x="1138.2" y="552.4" width="1.500" height="1.500" fill="#fbfbfb"/><rect x="1139" y="553.2" width="1.600" height="1.600" fill="#b0b0b0"/><rect x="1138.2" y="556.4" width="1.500" height="1.500" fill="#fbfbfb"/><rect x="1139" y="557.2" width="1.600" height="1.600" fill="#b0b0b0"/><rect x="1143.2" y="552.4" width="1.500" height="1.500" fill="#fbfbfb"/><rect x="1144" y="553.2" width="1.600" height="1.600" fill="#b0b0b0"/><rect x="1143.2" y="556.4" width="1.500" height="1.500" fill="#fbfbfb"/><rect x="1144" y="557.2" width="1.600" height="1.600" fill="#b0b0b0"/><rect x="1148.2" y="552.4" width="1.500" height="1.500" fill="#fbfbfb"/><rect x="1149" y="553.2" width="1.600" height="1.600" fill="#b0b0b0"/><rect x="1148.2" y="556.4" width="1.500" height="1.500" fill="#fbfbfb"/><rect x="1149" y="557.2" width="1.600" height="1.600" fill="#b0b0b0"/><rect x="1153.2" y="552.4" width="1.500" height="1.500" fill="#fbfbfb"/><rect x="1154" y="553.2" width="1.600" height="1.600" fill="#b0b0b0"/><rect x="1153.2" y="556.4" width="1.500" height="1.500" fill="#fbfbfb"/><rect x="1154" y="557.2" width="1.600" height="1.600" fill="#b0b0b0"/><rect x="1158.2" y="552.4" width="1.500" height="1.500" fill="#fbfbfb"/><rect x="1159" y="553.2" width="1.600" height="1.600" fill="#b0b0b0"/><rect x="1158.2" y="556.4" width="1.500" height="1.500" fill="#fbfbfb"/><rect x="1159" y="557.2" width="1.600" height="1.600" fill="#b0b0b0"/><rect x="1163.2" y="552.4" width="1.500" height="1.500" fill="#fbfbfb"/><rect x="1164" y="553.2" width="1.600" height="1.600" fill="#b0b0b0"/><rect x="1163.2" y="556.4" width="1.500" height="1.500" fill="#fbfbfb"/><rect x="1164" y="557.2" width="1.600" height="1.600" fill="#b0b0b0"/><rect x="1168.2" y="552.4" width="1.500" height="1.500" fill="#fbfbfb"/><rect x="1169" y="553.2" width="1.600" height="1.600" fill="#b0b0b0"/><rect x="1168.2" y="556.4" width="1.500" height="1.500" fill="#fbfbfb"/><rect x="1169" y="557.2" width="1.600" height="1.600" fill="#b0b0b0"/><rect x="1173.2" y="552.4" width="1.500" height="1.500" fill="#fbfbfb"/><rect x="1174" y="553.2" width="1.600" height="1.600" fill="#b0b0b0"/><rect x="1173.2" y="556.4" width="1.500" height="1.500" fill="#fbfbfb"/><rect x="1174" y="557.2" width="1.600" height="1.600" fill="#b0b0b0"/><rect x="1178.2" y="552.4" width="1.500" height="1.500" fill="#fbfbfb"/><rect x="1179" y="553.2" width="1.600" height="1.600" fill="#b0b0b0"/><rect x="1178.2" y="556.4" width="1.500" height="1.500" fill="#fbfbfb"/><rect x="1179" y="557.2" width="1.600" height="1.600" fill="#b0b0b0"/><rect x="1183.2" y="552.4" width="1.500" height="1.500" fill="#fbfbfb"/><rect x="1184" y="553.2" width="1.600" height="1.600" fill="#b0b0b0"/><rect x="1183.2" y="556.4" width="1.500" height="1.500" fill="#fbfbfb"/><rect x="1184" y="557.2" width="1.600" height="1.600" fill="#b0b0b0"/><rect x="1188.2" y="552.4" width="1.500" height="1.500" fill="#fbfbfb"/><rect x="1189" y="553.2" width="1.600" height="1.600" fill="#b0b0b0"/><rect x="1188.2" y="556.4" width="1.500" height="1.500" fill="#fbfbfb"/><rect x="1189" y="557.2" width="1.600" height="1.600" fill="#b0b0b0"/><rect x="1193.2" y="552.4" width="1.500" height="1.500" fill="#fbfbfb"/><rect x="1194" y="553.2" width="1.600" height="1.600" fill="#b0b0b0"/><rect x="1193.2" y="556.4" width="1.500" height="1.500" fill="#fbfbfb"/><rect x="1194" y="557.2" width="1.600" height="1.600" fill="#b0b0b0"/><rect x="1198.2" y="552.4" width="1.500" height="1.500" fill="#fbfbfb"/><rect x="1199" y="553.2" width="1.600" height="1.600" fill="#b0b0b0"/><rect x="1198.2" y="556.4" width="1.500" height="1.500" fill="#fbfbfb"/><rect x="1199" y="557.2" width="1.600" height="1.600" fill="#b0b0b0"/><rect x="1203.2" y="552.4" width="1.500" height="1.500" fill="#fbfbfb"/><rect x="1204" y="553.2" width="1.600" height="1.600" fill="#b0b0b0"/><rect x="1203.2" y="556.4" width="1.500" height="1.500" fill="#fbfbfb"/><rect x="1204" y="557.2" width="1.600" height="1.600" fill="#b0b0b0"/><rect x="1208.2" y="552.4" width="1.500" height="1.500" fill="#fbfbfb"/><rect x="1209" y="553.2" width="1.600" height="1.600" fill="#b0b0b0"/><rect x="1208.2" y="556.4" width="1.500" height="1.500" fill="#fbfbfb"/><rect x="1209" y="557.2" width="1.600" height="1.600" fill="#b0b0b0"/><rect x="1213.2" y="552.4" width="1.500" height="1.500" fill="#fbfbfb"/><rect x="1214" y="553.2" width="1.600" height="1.600" fill="#b0b0b0"/><rect x="1213.2" y="556.4" width="1.500" height="1.500" fill="#fbfbfb"/><rect x="1214" y="557.2" width="1.600" height="1.600" fill="#b0b0b0"/><rect x="1218.2" y="552.4" width="1.500" height="1.500" fill="#fbfbfb"/><rect x="1219" y="553.2" width="1.600" height="1.600" fill="#b0b0b0"/><rect x="1218.2" y="556.4" width="1.500" height="1.500" fill="#fbfbfb"/><rect x="1219" y="557.2" width="1.600" height="1.600" fill="#b0b0b0"/><rect x="1223.2" y="552.4" width="1.500" height="1.500" fill="#fbfbfb"/><rect x="1224" y="553.2" width="1.600" height="1.600" fill="#b0b0b0"/><rect x="1223.2" y="556.4" width="1.500" height="1.500" fill="#fbfbfb"/><rect x="1224" y="557.2" width="1.600" height="1.600" fill="#b0b0b0"/><rect x="1228.2" y="552.4" width="1.500" height="1.500" fill="#fbfbfb"/><rect x="1229" y="553.2" width="1.600" height="1.600" fill="#b0b0b0"/><rect x="1228.2" y="556.4" width="1.500" height="1.500" fill="#fbfbfb"/><rect x="1229" y="557.2" width="1.600" height="1.600" fill="#b0b0b0"/><rect x="1233.2" y="552.4" width="1.500" height="1.500" fill="#fbfbfb"/><rect x="1234" y="553.2" width="1.600" height="1.600" fill="#b0b0b0"/><rect x="1233.2" y="556.4" width="1.500" height="1.500" fill="#fbfbfb"/><rect x="1234" y="557.2" width="1.600" height="1.600" fill="#b0b0b0"/><rect x="1238.2" y="552.4" width="1.500" height="1.500" fill="#fbfbfb"/><rect x="1239" y="553.2" width="1.600" height="1.600" fill="#b0b0b0"/><rect x="1238.2" y="556.4" width="1.500" height="1.500" fill="#fbfbfb"/><rect x="1239" y="557.2" width="1.600" height="1.600" fill="#b0b0b0"/><rect x="1243.2" y="552.4" width="1.500" height="1.500" fill="#fbfbfb"/><rect x="1244" y="553.2" width="1.600" height="1.600" fill="#b0b0b0"/><rect x="1243.2" y="556.4" width="1.500" height="1.500" fill="#fbfbfb"/><rect x="1244" y="557.2" width="1.600" height="1.600" fill="#b0b0b0"/><rect x="1248.2" y="552.4" width="1.500" height="1.500" fill="#fbfbfb"/><rect x="1249" y="553.2" width="1.600" height="1.600" fill="#b0b0b0"/><rect x="1248.2" y="556.4" width="1.500" height="1.500" fill="#fbfbfb"/><rect x="1249" y="557.2" width="1.600" height="1.600" fill="#b0b0b0"/><rect x="1253.2" y="552.4" width="1.500" height="1.500" fill="#fbfbfb"/><rect x="1254" y="553.2" width="1.600" height="1.600" fill="#b0b0b0"/><rect x="1253.2" y="556.4" width="1.500" height="1.500" fill="#fbfbfb"/><rect x="1254" y="557.2" width="1.600" height="1.600" fill="#b0b0b0"/><rect x="1258.2" y="552.4" width="1.500" height="1.500" fill="#fbfbfb"/><rect x="1259" y="553.2" width="1.600" height="1.600" fill="#b0b0b0"/><rect x="1258.2" y="556.4" width="1.500" height="1.500" fill="#fbfbfb"/><rect x="1259" y="557.2" width="1.600" height="1.600" fill="#b0b0b0"/><rect x="1263.2" y="552.4" width="1.500" height="1.500" fill="#fbfbfb"/><rect x="1264" y="553.2" width="1.600" height="1.600" fill="#b0b0b0"/><rect x="1263.2" y="556.4" width="1.500" height="1.500" fill="#fbfbfb"/><rect x="1264" y="557.2" width="1.600" height="1.600" fill="#b0b0b0"/><rect x="1268.2" y="552.4" width="1.500" height="1.500" fill="#fbfbfb"/><rect x="1269" y="553.2" width="1.600" height="1.600" fill="#b0b0b0"/><rect x="1268.2" y="556.4" width="1.500" height="1.500" fill="#fbfbfb"/><rect x="1269" y="557.2" width="1.600" height="1.600" fill="#b0b0b0"/><rect x="1273.2" y="552.4" width="1.500" height="1.500" fill="#fbfbfb"/><rect x="1274" y="553.2" width="1.600" height="1.600" fill="#b0b0b0"/><rect x="1273.2" y="556.4" width="1.500" height="1.500" fill="#fbfbfb"/><rect x="1274" y="557.2" width="1.600" height="1.600" fill="#b0b0b0"/><rect x="1278.2" y="552.4" width="1.500" height="1.500" fill="#fbfbfb"/><rect x="1279" y="553.2" width="1.600" height="1.600" fill="#b0b0b0"/><rect x="1278.2" y="556.4" width="1.500" height="1.500" fill="#fbfbfb"/><rect x="1279" y="557.2" width="1.600" height="1.600" fill="#b0b0b0"/><rect x="1283.2" y="552.4" width="1.500" height="1.500" fill="#fbfbfb"/><rect x="1284" y="553.2" width="1.600" height="1.600" fill="#b0b0b0"/><rect x="1283.2" y="556.4" width="1.500" height="1.500" fill="#fbfbfb"/><rect x="1284" y="557.2" width="1.600" height="1.600" fill="#b0b0b0"/><rect x="1288.2" y="552.4" width="1.500" height="1.500" fill="#fbfbfb"/><rect x="1289" y="553.2" width="1.600" height="1.600" fill="#b0b0b0"/><rect x="1288.2" y="556.4" width="1.500" height="1.500" fill="#fbfbfb"/><rect x="1289" y="557.2" width="1.600" height="1.600" fill="#b0b0b0"/><rect x="1293.2" y="552.4" width="1.500" height="1.500" fill="#fbfbfb"/><rect x="1294" y="553.2" width="1.600" height="1.600" fill="#b0b0b0"/><rect x="1293.2" y="556.4" width="1.500" height="1.500" fill="#fbfbfb"/><rect x="1294" y="557.2" width="1.600" height="1.600" fill="#b0b0b0"/><rect x="1298.2" y="552.4" width="1.500" height="1.500" fill="#fbfbfb"/><rect x="1299" y="553.2" width="1.600" height="1.600" fill="#b0b0b0"/><rect x="1298.2" y="556.4" width="1.500" height="1.500" fill="#fbfbfb"/><rect x="1299" y="557.2" width="1.600" height="1.600" fill="#b0b0b0"/><rect x="1303.2" y="552.4" width="1.500" height="1.500" fill="#fbfbfb"/><rect x="1304" y="553.2" width="1.600" height="1.600" fill="#b0b0b0"/><rect x="1303.2" y="556.4" width="1.500" height="1.500" fill="#fbfbfb"/><rect x="1304" y="557.2" width="1.600" height="1.600" fill="#b0b0b0"/><rect x="1308.2" y="552.4" width="1.500" height="1.500" fill="#fbfbfb"/><rect x="1309" y="553.2" width="1.600" height="1.600" fill="#b0b0b0"/><rect x="1308.2" y="556.4" width="1.500" height="1.500" fill="#fbfbfb"/><rect x="1309" y="557.2" width="1.600" height="1.600" fill="#b0b0b0"/><rect x="1313.2" y="552.4" width="1.500" height="1.500" fill="#fbfbfb"/><rect x="1314" y="553.2" width="1.600" height="1.600" fill="#b0b0b0"/><rect x="1313.2" y="556.4" width="1.500" height="1.500" fill="#fbfbfb"/><rect x="1314" y="557.2" width="1.600" height="1.600" fill="#b0b0b0"/><rect x="1318.2" y="552.4" width="1.500" height="1.500" fill="#fbfbfb"/><rect x="1319" y="553.2" width="1.600" height="1.600" fill="#b0b0b0"/><rect x="1318.2" y="556.4" width="1.500" height="1.500" fill="#fbfbfb"/><rect x="1319" y="557.2" width="1.600" height="1.600" fill="#b0b0b0"/><rect x="1323.2" y="552.4" width="1.500" height="1.500" fill="#fbfbfb"/><rect x="1324" y="553.2" width="1.600" height="1.600" fill="#b0b0b0"/><rect x="1323.2" y="556.4" width="1.500" height="1.500" fill="#fbfbfb"/><rect x="1324" y="557.2" width="1.600" height="1.600" fill="#b0b0b0"/><rect x="1328.2" y="552.4" width="1.500" height="1.500" fill="#fbfbfb"/><rect x="1329" y="553.2" width="1.600" height="1.600" fill="#b0b0b0"/><rect x="1328.2" y="556.4" width="1.500" height="1.500" fill="#fbfbfb"/><rect x="1329" y="557.2" width="1.600" height="1.600" fill="#b0b0b0"/><rect x="1333.2" y="552.4" width="1.500" height="1.500" fill="#fbfbfb"/><rect x="1334" y="553.2" width="1.600" height="1.600" fill="#b0b0b0"/><rect x="1333.2" y="556.4" width="1.500" height="1.500" fill="#fbfbfb"/><rect x="1334" y="557.2" width="1.600" height="1.600" fill="#b0b0b0"/>
<rect x="1341" y="552" width="10.400" height="10" fill="#f3a08e"/><path d="M1344 554.5l6.500 6.500M1350.5 554.5l-6.500 6.500" stroke="#3c2030" stroke-width="3.200"/><path d="M1344 554.5l6.500 6.500M1350.5 554.5l-6.500 6.500" stroke="#fff" stroke-width="1.900"/><path d="M1341.7 561.6v-8.200q0-0.700 0.700-0.700h8.800" fill="none" stroke="#4a0a1c" stroke-width="1.400"/>
<g fill="none" stroke="#d59a00" stroke-width="2.100"><path d="M1134 568.700C1130.400 568 1127.200 569.800 1126.700 573"/><path d="M1128.200 579.500C1131.800 580.200 1135 578.400 1135.500 575.200"/></g><path d="M1122.800 572.700h7.600l-3.800 4.400z" fill="#d59a00"/><path d="M1131.800 575.500h7.600l-3.800-4.600z" fill="#d59a00"/>
<path d="M1146.800 570.200l5-4.600v3h7.200v3.200h-7.200v3z" fill="#d59a00"/><path d="M1162.200 577.300l-5-4.600v3h-7.200v3.200h7.200v3z" fill="#d59a00"/>
<path d="M1172.500 567v5M1172.500 577v4M1184.500 567v14" stroke="#7b7b7b" stroke-width="1"/><path d="M1174.500 568.500h2M1179.500 568.500h4M1177 570.500h3M1181.500 570.500h1.500M1178.500 572.500h1M1181.500 572.500h1.500M1178 577.500h3.500M1176 579.500h3M1181 579.500h2" stroke="#c2c2c2" stroke-width="1"/><path d="M1179 574.500h4" stroke="#d92b2b" stroke-width="1.300"/><path d="M1169 573h5.200v-2.200l3.800 3.700-3.800 3.700v-2.200h-5.200z" fill="#d59a00"/>
<rect x="1191" y="565" width="1" height="18" fill="#8a8a8a"/>
<path d="M1202.4 570.500v11.200M1202.4 573.300h2.400M1202.4 579.600h2.400" stroke="#7b7b7b" stroke-width="1" fill="none"/><circle cx="1202.5" cy="568.400" r="2.700" fill="#d59a00"/><path d="M1205.6 571.400h3.400M1204.6 573.300h1.600M1204.6 579.600h1.600" stroke="#d59a00" stroke-width="1.300"/>
<rect x="1207.7" y="573.500" width="8" height="7.600" fill="#fff" stroke="#6e6e6e" stroke-width="1.100"/>
<path d="M1209.2 577.300h5" stroke="#555" stroke-width="1"/>
<path d="M1211.7 574.800v5" stroke="#555" stroke-width="1"/>
<path d="M1225.4 570.500v11.200M1225.4 573.300h2.400M1225.4 579.600h2.400" stroke="#7b7b7b" stroke-width="1" fill="none"/><circle cx="1225.5" cy="568.400" r="2.700" fill="#d59a00"/><path d="M1228.6 571.400h3.400M1227.6 573.300h1.600M1227.6 579.600h1.600" stroke="#d59a00" stroke-width="1.300"/>
<rect x="1230.7" y="573.500" width="8" height="7.600" fill="#fff" stroke="#6e6e6e" stroke-width="1.100"/>
<path d="M1232.2 577.300h5" stroke="#555" stroke-width="1"/>
<rect x="1245" y="565" width="1" height="18" fill="#8a8a8a"/>
<text x="1255.600" y="572.700" font-family="Liberation Sans, sans-serif" font-weight="bold" font-size="7.800" fill="#2e649e" textLength="4.800" lengthAdjust="spacingAndGlyphs">A</text><text x="1255.800" y="580.800" font-family="Liberation Sans, sans-serif" font-weight="bold" font-size="7.800" fill="#d92b2b" textLength="4.600" lengthAdjust="spacingAndGlyphs">Z</text>
<path d="M1265.500 566.800v11.400" stroke="#d59a00" stroke-width="1.200"/><path d="M1261.800 577.400h7.400l-3.700 4.200z" fill="#d59a00"/>
<rect x="1276" y="565" width="1" height="18" fill="#8a8a8a"/>
<path d="M1286 569h12v3h-7.200v8.800h-4.800z" fill="#d59a00"/><path d="M1289.200 569.800v-1.400h1.200v-2.400h3.600v2.400h1.200v1.400z" fill="#6e6e6e"/><rect x="1291.400" y="567" width="1.600" height="1.200" fill="#f0f0f0"/><path d="M1292.800 573.700h4l2.500 2.400v5.100h-6.500z" fill="#fff" stroke="#6e6e6e" stroke-width="1.100"/><path d="M1296.800 573.800v2.400h2.400" fill="none" stroke="#6e6e6e" stroke-width="0.800"/>
<path d="M1309.5 570.5h13v6l-3 3h-10z" fill="#fff" stroke="#6e6e6e" stroke-width="1.1"/><path d="M1322.5 576.5h-3v3" fill="none" stroke="#6e6e6e" stroke-width="0.8800000000000001"/>
<path d="M1313.800 575.600l7.400-7.400" stroke="#d92b2b" stroke-width="1.800"/>
<rect x="1329" y="565" width="1" height="18" fill="#8a8a8a"/>
<rect x="1120.500" y="585.500" width="231" height="402" fill="#fafafa" stroke="#7b8088" stroke-width="1"/><rect x="1121.500" y="586.500" width="229" height="400" fill="none" stroke="#fff" stroke-width="1"/>
<rect x="1140" y="587" width="66" height="16" fill="#d6d6d6"/>
<path d="M1132.5 603V650" stroke="#8c8c8c" stroke-width="1" stroke-dasharray="1 1" shape-rendering="crispEdges"/>
<path d="M1137 595.5H1142" stroke="#8c8c8c" stroke-width="1" stroke-dasharray="1 1" shape-rendering="crispEdges"/>
<path d="M1137 659.5H1142" stroke="#8c8c8c" stroke-width="1" stroke-dasharray="1 1" shape-rendering="crispEdges"/>
<path d="M1149.5 603V644" stroke="#8c8c8c" stroke-width="1" stroke-dasharray="1 1" shape-rendering="crispEdges"/>
<path d="M1150 611.5H1158" stroke="#8c8c8c" stroke-width="1" stroke-dasharray="1 1" shape-rendering="crispEdges"/>
<path d="M1150 627.5H1158" stroke="#8c8c8c" stroke-width="1" stroke-dasharray="1 1" shape-rendering="crispEdges"/>
<path d="M1150 643.5H1158" stroke="#8c8c8c" stroke-width="1" stroke-dasharray="1 1" shape-rendering="crispEdges"/>
<path d="M1128 593l3.500 3.500 3.500-3.500" fill="none" stroke="#404040" stroke-width="2"/>
<path d="M1129.6 655.2l3.6 3.8-3.6 3.8" fill="none" stroke="#a6a6a6" stroke-width="1.6"/>
<path d="M1143.6 599.4v-7h5.400l1.200-1.800h3.400v8.800z" fill="#fff" stroke="#c47a08" stroke-width="1.300"/><path d="M1149.6 592.4h4" stroke="#c47a08" stroke-width="1"/>
<path d="M1143.6 663.4v-7h5.400l1.200-1.800h3.400v8.800z" fill="#fff" stroke="#c47a08" stroke-width="1.300"/><path d="M1149.6 656.4h4" stroke="#c47a08" stroke-width="1"/>
<path d="M1159 616l2.6-4.6-0.6-1.6 5-2.800 5-2-2.600 4.600 0.600 1.600-5 2.600z" fill="#c47c0c"/>
<path d="M1159 632l2.6-4.6-0.6-1.6 5-2.800 5-2-2.600 4.600 0.600 1.600-5 2.600z" fill="#c47c0c"/>
<path d="M1159 648l2.6-4.6-0.6-1.6 5-2.800 5-2-2.600 4.600 0.600 1.600-5 2.600z" fill="#c47c0c"/>
<rect x="1122" y="970" width="228" height="16" fill="#f0f0f0"/><rect x="1139" y="970" width="171" height="15" fill="#cdcdcd"/>
<path d="M1132.0 974.2L1128.4 977.5L1132.0 980.8" fill="none" stroke="#505050" stroke-width="2.1"/><path d="M1339.4 974.2L1343.0 977.5L1339.4 980.8" fill="none" stroke="#505050" stroke-width="2.1"/>
</svg>
<span class="t" style="left:1164.5px;top:146.29px;font-size:11px;letter-spacing:-0.347px;">Files</span>
<span class="t" style="left:1164.5px;top:162.29px;font-size:11px;letter-spacing:-0.189px;">Directories</span>
<span class="t" style="left:1164.5px;top:178.29px;font-size:11px;letter-spacing:0.615px;">WWW</span>
<span class="t" style="left:1164.5px;top:194.29px;font-size:11px;letter-spacing:0.163px;">Tools</span>
<span class="t" style="left:1183.6px;top:210.29px;font-size:11px;letter-spacing:-0.188px;">Show Script in Explorer</span>
<span class="t" style="left:1164.5px;top:226.29px;font-size:11px;letter-spacing:-0.175px;">Scripts</span>
<span class="t" style="left:1183.9px;top:242.29px;font-size:11px;letter-spacing:-0.424px;">======== </span>
<span class="t" style="left:1234.6px;top:242.29px;font-size:11px;letter-spacing:-0.037px;">AutoIt3 </span>
<span class="t" style="left:1272.1px;top:242.29px;font-size:11px;letter-spacing:-0.424px;">========</span>
<span class="t" style="left:1183.5px;top:258.29px;font-size:11px;letter-spacing:-0.185px;">  -- Stop --</span>
<span class="t" style="left:1183.5px;top:274.29px;font-size:11px;letter-spacing:0.071px;">Run</span>
<span class="t" style="left:1183.5px;top:290.29px;font-size:11px;letter-spacing:-0.057px;">Check</span>
<span class="t" style="left:1183.5px;top:306.29px;font-size:11px;letter-spacing:-0.423px;">Compile</span>
<span class="t" style="left:1183.5px;top:322.29px;font-size:11px;letter-spacing:-0.292px;">Compile Dialog</span>
<span class="t" style="left:1183.5px;top:338.29px;font-size:11px;letter-spacing:-0.302px;">Jump through errors</span>
<span class="t" style="left:1183.5px;top:354.29px;font-size:11px;letter-spacing:-0.626px;">---------------------------</span>
<span class="t" style="left:1183.5px;top:370.29px;font-size:11px;letter-spacing:-0.267px;">Koda FormDesigner</span>
<span class="t" style="left:1183.5px;top:386.29px;font-size:11px;letter-spacing:-0.025px;">Tidy for Au3</span>
<span class="t" style="left:1161px;top:590.29px;font-size:11px;letter-spacing:-0.213px;">Function</span>
<span class="t" style="left:1177.8px;top:606.29px;font-size:11px;letter-spacing:-0.260px;">Func Example()</span>
<div style="left:1170px;top:619px;width:180px;height:16px;overflow:hidden"><span class="t" style="left:7.8px;top:3.29px;font-size:11px;letter-spacing:-0.125px;">Func Swap(ByRef $vVar1, ByRef $vVar2)</span></div>
<span class="t" style="left:1177.8px;top:638.29px;font-size:11px;letter-spacing:-0.042px;">Func Today()</span>
<span class="t" style="left:1160.6px;top:654.29px;font-size:11px;letter-spacing:-0.156px;">Variable declaration</span>
<div style="left:1px;top:988px;width:1119px;height:1px;background:#dadada"></div>
<div style="left:200px;top:990px;width:1px;height:18px;background:#d7d7d7"></div>
<div style="left:250px;top:990px;width:1px;height:18px;background:#d7d7d7"></div>
<div style="left:269px;top:990px;width:1px;height:18px;background:#d7d7d7"></div>
<div style="left:288px;top:990px;width:1px;height:18px;background:#d7d7d7"></div>
<div style="left:307px;top:990px;width:1px;height:18px;background:#d7d7d7"></div>
<div style="left:326px;top:990px;width:1px;height:18px;background:#d7d7d7"></div>
<div style="left:426px;top:990px;width:1px;height:18px;background:#d7d7d7"></div>
<div style="left:566px;top:990px;width:1px;height:18px;background:#d7d7d7"></div>
<div style="left:626px;top:990px;width:1px;height:18px;background:#d7d7d7"></div>
<span class="t" style="left:54.4px;top:993.44px;font-size:12px;letter-spacing:-0.270px;">1 : 1 (1) / 28  [894]</span>
<span class="t" style="left:345.6px;top:993.44px;font-size:12px;letter-spacing:0.312px;">#</span>
<span class="t" style="left:362px;top:993.44px;font-size:12px;letter-spacing:-0.780px;">35</span>
<span class="t" style="left:380.6px;top:993.44px;font-size:12px;letter-spacing:-0.795px;">$0023</span>
<span class="t" style="left:478px;top:993.44px;font-size:12px;letter-spacing:0.138px;">AutoIt3</span>
<span class="t" style="left:586px;top:993.44px;font-size:12px;letter-spacing:-0.872px;">DOS</span>
<span class="t" style="left:631px;top:993.44px;font-size:12px;letter-spacing:-0.265px;">Unicode UTF-8 no BOM (65001)</span>
<svg style="left:273px;top:994px" width="13" height="9" viewBox="0 0 13 9" shape-rendering="crispEdges"><g fill="#1a1a9a"><rect x="0" y="1" width="12" height="1"/><rect x="0" y="3" width="12" height="1"/><rect x="0" y="5" width="12" height="1"/><rect x="0" y="7" width="8" height="1"/></g></svg>
<svg style="left:1339px;top:996px" width="12" height="11" viewBox="0 0 12 11" shape-rendering="crispEdges"><rect x="9" y="1" width="2" height="2" fill="#bdbdbd"/><rect x="6" y="4" width="2" height="2" fill="#bdbdbd"/><rect x="9" y="4" width="2" height="2" fill="#bdbdbd"/><rect x="3" y="7" width="2" height="2" fill="#bdbdbd"/><rect x="6" y="7" width="2" height="2" fill="#bdbdbd"/><rect x="9" y="7" width="2" height="2" fill="#bdbdbd"/></svg>
</div>
</body></html>
